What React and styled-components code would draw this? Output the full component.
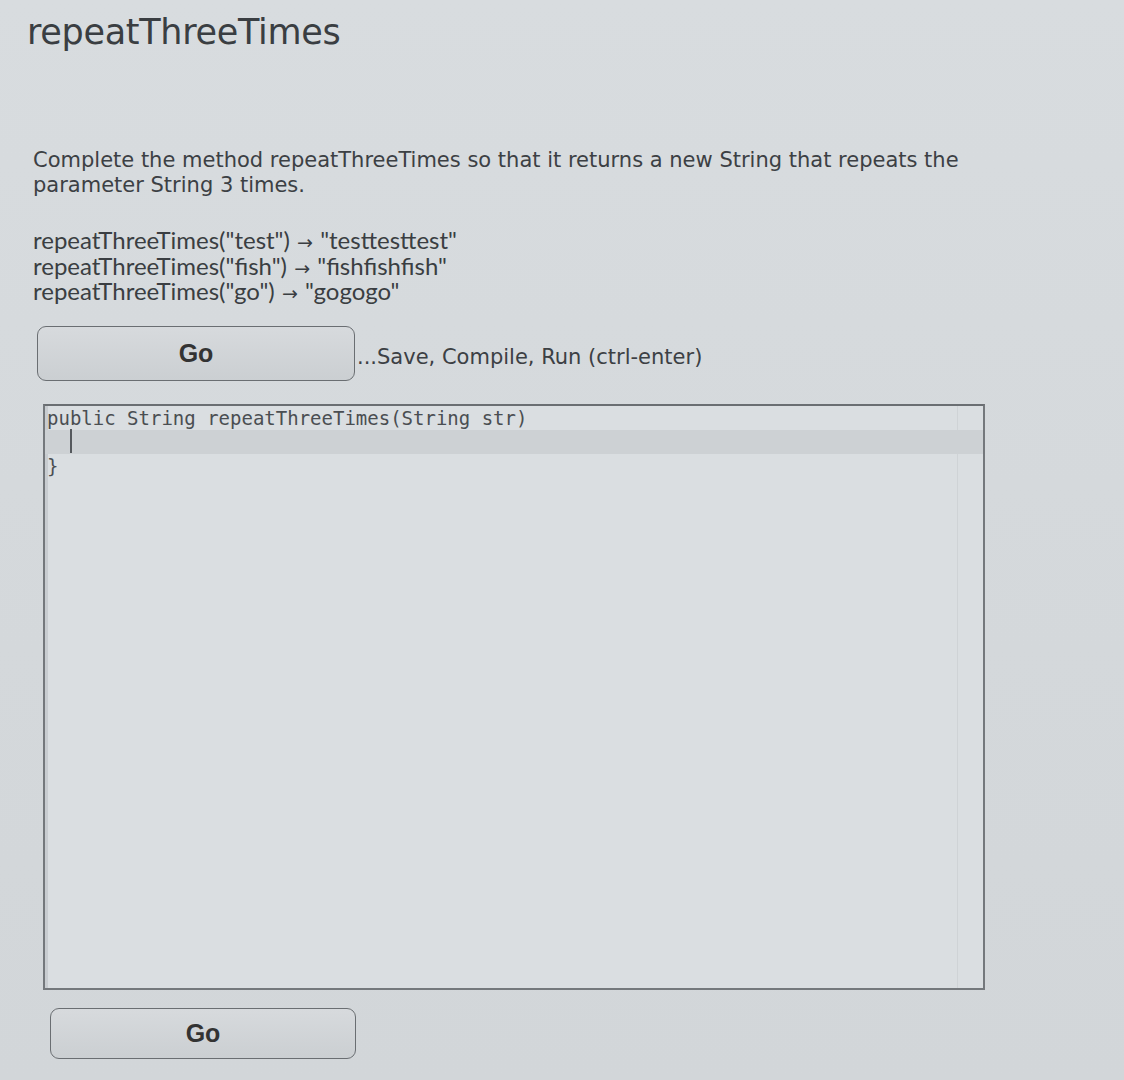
import styled, { createGlobalStyle } from "styled-components";

const Global = createGlobalStyle`
  html, body {
    margin: 0;
    padding: 0;
    background: #d6dadd;
  }
  body {
    font-family: "DejaVu Sans", Verdana, sans-serif;
    color: #2e3236;
  }
`;

const Page = styled.div`
  width: 1124px;
  height: 1080px;
  box-sizing: border-box;
  padding: 12px 0 0 27px;
  background: linear-gradient(180deg, #d8dcdf 0%, #d4d8db 60%, #d2d6d9 100%);
  overflow: hidden;
`;

const Title = styled.h1`
  margin: 0;
  font-size: 35px;
  font-weight: normal;
  color: #3a3e42;
  letter-spacing: -0.3px;
`;

const Desc = styled.p`
  margin: 96px 0 0 6px;
  width: 1000px;
  font-size: 21px;
  line-height: 25px;
  color: #3c4044;
`;

const Examples = styled.div`
  margin: 29px 0 0 6px;
  font-family: Lato, "Open Sans", sans-serif;
  font-size: 24px;
  color: #3a3e42;
`;

const ExampleLine = styled.div`
  height: 25.5px;
  line-height: 25.5px;
  white-space: nowrap;
`;

const Arrow = styled.span`
  font-family: "DejaVu Sans", sans-serif;
  font-size: 19px;
  line-height: 0;
  margin: 0 1px;
`;

const GoRow = styled.div`
  display: flex;
  align-items: center;
  margin: ${(p) => p.$top}px 0 0 ${(p) => p.$left}px;
`;

const GoButton = styled.button`
  width: ${(p) => p.$w}px;
  height: ${(p) => p.$h}px;
  border: 1.5px solid #6a6e72;
  border-radius: 9px;
  background: linear-gradient(180deg, #d7dadd 0%, #cbcfd2 100%);
  font-family: "Liberation Sans", Arial, sans-serif;
  font-weight: bold;
  font-size: 25px;
  color: #333;
  padding: 0;
`;

const Hint = styled.span`
  margin-left: 2px;
  font-size: 21px;
  color: #3c4044;
  padding-top: 8px;
  font-family: "DejaVu Sans", Verdana, sans-serif;
`;

const Editor = styled.div`
  position: relative;
  margin: 23px 0 0 16px;
  width: 942px;
  height: 586px;
  border: 2px solid #74787c;
  border-top-color: #6a6e72;
  background: #dadee1;
  box-sizing: border-box;
  overflow: hidden;
`;

const Gutter = styled.div`
  position: absolute;
  left: 0;
  top: 0;
  bottom: 0;
  width: 3px;
  background: #c8ccd0;
`;

const Margin = styled.div`
  position: absolute;
  top: 0;
  bottom: 0;
  left: 912px;
  width: 1px;
  background: #cfd3d6;
`;

const Lines = styled.div`
  font-family: "DejaVu Sans Mono", monospace;
  font-size: 19px;
  color: #4a4e52;
`;

const Line = styled.div`
  height: 24px;
  line-height: 24px;
  padding-left: 2px;
  white-space: pre;
  background: ${(p) => (p.$active ? "#cdd1d4" : "transparent")};
  position: relative;
`;

const Caret = styled.span`
  position: absolute;
  left: 25px;
  top: -1px;
  width: 2px;
  height: 24px;
  background: #55595d;
`;

const examples = [
  ['repeatThreeTimes("test")', '"testtesttest"'],
  ['repeatThreeTimes("fish")', '"fishfishfish"'],
  ['repeatThreeTimes("go")', '"gogogo"'],
];

export default function App() {
  return (
    <>
      <Global />
      <Page>
        <Title>repeatThreeTimes</Title>
        <Desc>
          Complete the method repeatThreeTimes so that it returns a new String that repeats the
          <br />
          parameter String 3 times.
        </Desc>
        <Examples>
          {examples.map(([call, result]) => (
            <ExampleLine key={call}>
              {call} <Arrow>→</Arrow> {result}
            </ExampleLine>
          ))}
        </Examples>
        <GoRow $top={22} $left={10}>
          <GoButton $w={318} $h={55}>Go</GoButton>
          <Hint>...Save, Compile, Run (ctrl-enter)</Hint>
        </GoRow>
        <Editor>
          <Gutter />
          <Margin />
          <Lines>
            <Line>public String repeatThreeTimes(String str)</Line>
            <Line $active>
              <Caret />
            </Line>
            <Line>{"}"}</Line>
          </Lines>
        </Editor>
        <GoRow $top={18} $left={23}>
          <GoButton $w={306} $h={51}>Go</GoButton>
        </GoRow>
      </Page>
    </>
  );
}
